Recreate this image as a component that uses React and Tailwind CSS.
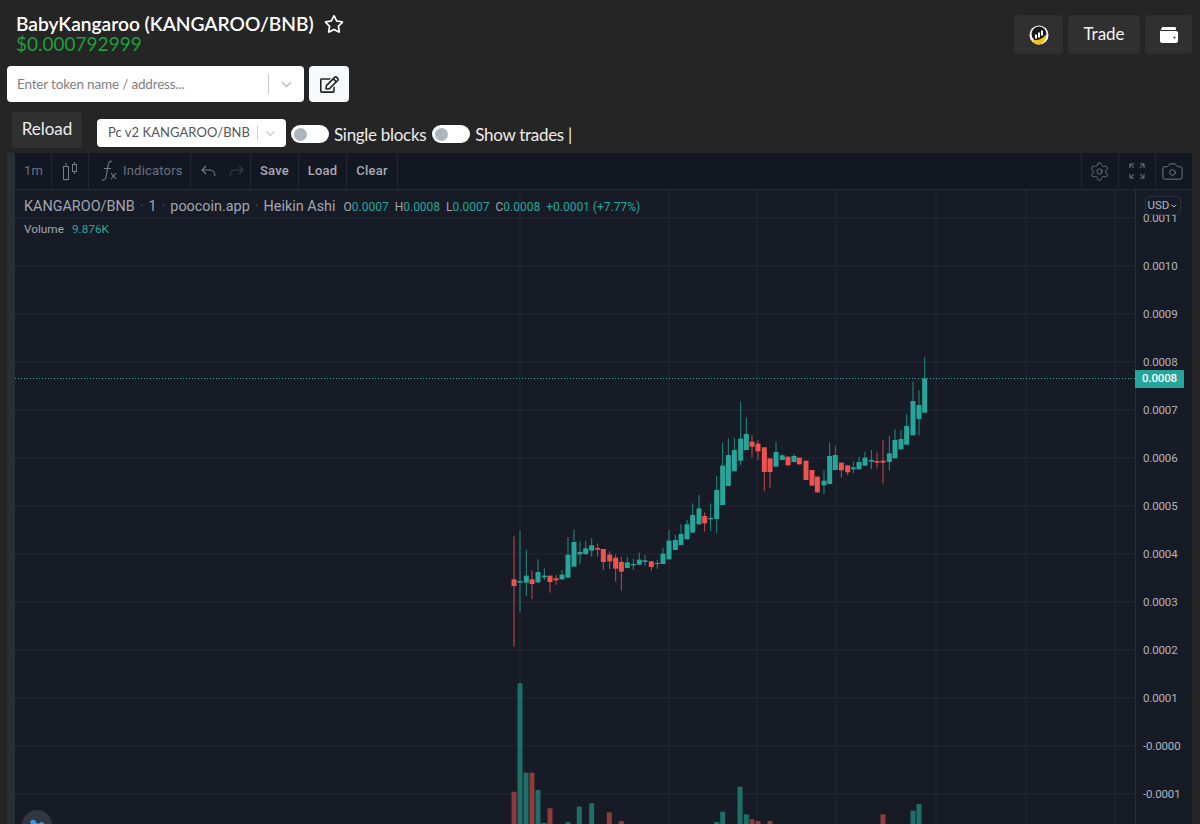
import { ChevronDown, Settings, Camera } from "lucide-react";
import { FaRegEdit, FaRegStar } from "react-icons/fa";

// candles read off the chart: x, wick top, wick bottom, body top, body bottom, green?
const toCandle = (ox, oy) => ([x, wt, wb, bt, bb, up]) => [ox + x / 3, oy + wt / 3, oy + wb / 3, oy + bt / 3, oy + bb / 3, up];

const firstHalf = [
  [42, 109, 440, 238, 258, 0], [60, 92, 335, 243, 248, 1], [79, 150, 288, 227, 248, 1], [96, 212, 297, 238, 252, 0],
  [114, 178, 250, 216, 247, 1], [133, 205, 240, 227, 232, 1], [150, 227, 278, 227, 246, 0], [168, 224, 255, 235, 241, 0],
  [186, 210, 240, 224, 238, 1], [204, 112, 233, 164, 233, 1], [222, 88, 200, 126, 200, 1], [240, 124, 192, 156, 163, 1],
  [257, 122, 165, 145, 162, 1], [275, 115, 170, 136, 152, 1], [293, 130, 170, 144, 149, 0], [310, 147, 210, 147, 186, 0],
  [329, 153, 207, 164, 184, 0], [347, 163, 245, 173, 206, 0], [364, 170, 272, 186, 215, 0], [382, 172, 205, 187, 204, 1],
  [400, 176, 210, 192, 196, 1], [418, 158, 196, 179, 194, 1], [435, 165, 197, 181, 186, 1], [454, 183, 213, 184, 201, 0],
  [472, 180, 207, 189, 192, 1], [489, 143, 192, 161, 192, 1], [507, 90, 178, 122, 178, 1], [526, 105, 150, 120, 150, 1],
  [543, 73, 135, 102, 135, 1], [561, 60, 118, 73, 118, 1], [578, 10, 98, 45, 98, 1], [597, -15, 73, 25, 73, 1],
  [614, 37, 95, 48, 70, 0], [632, 10, 93, 54, 58, 1],
].map(toCandle(500, 500));

const secondHalf = [
  [50, 378, 549, 420, 507, 1], [68, 278, 465, 347, 465, 1], [85, 265, 408, 315, 408, 1], [103, 264, 364, 300, 364, 1],
  [122, 155, 345, 266, 332, 1], [139, 202, 300, 252, 300, 1], [156, 255, 323, 275, 290, 0], [174, 270, 330, 281, 304, 0],
  [193, 292, 424, 292, 366, 0], [210, 325, 413, 325, 366, 0], [228, 275, 350, 306, 350, 1], [247, 312, 330, 316, 330, 1],
  [264, 320, 347, 320, 346, 0], [282, 312, 337, 318, 336, 1], [298, 323, 344, 323, 343, 0], [318, 332, 390, 332, 390, 0],
  [336, 360, 407, 360, 407, 0], [352, 380, 428, 380, 427, 0], [372, 360, 432, 392, 406, 1], [389, 278, 402, 318, 402, 1],
  [406, 288, 360, 315, 360, 1], [424, 338, 382, 338, 361, 0], [443, 346, 375, 346, 367, 0], [460, 335, 370, 352, 358, 1],
  [477, 320, 358, 336, 358, 1], [495, 305, 348, 323, 347, 1], [514, 300, 358, 330, 335, 1], [531, 308, 356, 333, 338, 0],
  [549, 270, 400, 332, 338, 0], [568, 258, 362, 310, 336, 1], [585, 238, 325, 270, 325, 1], [603, 240, 298, 267, 298, 1],
  [620, 192, 285, 228, 284, 1], [639, 95, 256, 153, 256, 1], [657, 120, 256, 165, 207, 1], [674, 22, 188, 85, 188, 1],
].map(toCandle(700, 350));

const candles = [...firstHalf, ...secondHalf];

// volume bars: x, top, green?
const volumes = [
  [514, 791.7, 0], [520, 683.3, 1], [526, 772.7, 1], [532, 772.7, 0], [538, 790, 1], [544, 823, 1], [550, 808.3, 0],
  [568, 822, 1], [579.3, 806.7, 1], [591.7, 803.3, 1], [609.3, 812.3, 0], [621.3, 821, 0], [716.7, 822, 1], [722.7, 811.7, 1],
  [740, 786.7, 1], [746.3, 814.3, 1], [752, 819.3, 0], [758, 821, 0], [770, 821, 0], [883, 814.3, 0], [913, 810.7, 1], [919, 804, 1],
];

const prices = ["0.0011", "0.0010", "0.0009", "0.0008", "0.0007", "0.0006", "0.0005", "0.0004", "0.0003", "0.0002", "0.0001", "-0.0000", "-0.0001"];
const gridY = prices.map((_, i) => 218 + i * 48);
const gridX = [520, 669, 757, 836, 936, 1026, 1115];

const GREEN = "#26a69a";
const RED = "#ef5350";

function PriceChart() {
  return (
    <svg className="h-full flex-1" viewBox="15 190 1120 634" preserveAspectRatio="none">
      {gridY.map((y) => (
        <line key={y} x1="15" x2="1135" y1={y} y2={y} stroke="#252934" />
      ))}
      {gridX.map((x) => (
        <line key={x} x1={x} x2={x} y1="190" y2="824" stroke="#252934" />
      ))}
      <line x1="15" x2="1135" y1="378.5" y2="378.5" stroke={GREEN} strokeDasharray="1 2" />
      {volumes.map(([x, top, up]) => (
        <rect key={x} x={x - 2.5} y={top} width="5" height={824 - top} fill={up ? "#1f6f69" : "#8e3b3c"} />
      ))}
      {candles.map(([x, wt, wb, bt, bb, up]) => (
        <g key={x} fill={up ? GREEN : RED}>
          <rect x={x - 0.5} y={wt} width="1" height={wb - wt} opacity="0.8" />
          <rect x={x - 2.5} y={bt} width="5" height={Math.max(bb - bt, 1)} />
        </g>
      ))}
    </svg>
  );
}

function ToolCell({ className = "", children }) {
  return <div className={`flex h-full items-center border-r border-[#232733] ${className}`}>{children}</div>;
}

function Toggle({ label }) {
  return (
    <div className="flex items-center">
      <div className="flex h-[18px] w-[38px] items-center rounded-full bg-white pl-[3px]">
        <div className="h-[13px] w-[13px] rounded-full bg-[#adb5bd]" />
      </div>
      <span className="ml-[5px] mt-[2px] whitespace-nowrap text-[17px] tracking-[-0.3px] text-[#ececec]">{label}</span>
    </div>
  );
}

export default function App() {
  return (
    <div className="h-[824px] w-[1200px] overflow-hidden bg-[#252525] font-['Lato',sans-serif]">
      <div className="flex h-[66px] justify-between">
        <div className="pl-4 pt-[13px]">
          <div className="flex h-[22px] items-center">
            <h1 className="text-[19.2px] font-semibold leading-none tracking-[-0.02px] text-white">BabyKangaroo (KANGAROO/BNB)</h1>
            <FaRegStar className="ml-[10px] text-[20px] text-white" />
          </div>
          <div className="-mt-px text-[19px] leading-[20px] text-[#1f9e3c]">$0.000792999</div>
        </div>
        <div className="flex gap-[5px] pr-2 pt-[15px]">
          <button className="flex h-[39px] w-[49px] items-center justify-center rounded bg-[#303030]">
            <svg width="20" height="20" viewBox="0 0 20 20">
              <circle cx="10" cy="10" r="9.5" fill="#fff" />
              <circle cx="10" cy="9" r="7.5" fill="#1a1a1a" />
              <path d="M3 14.5c5 1.5 10 0 14-5 .5 5-3 10-7.500 10-3 0-5.500-2-6.500-5z" fill="#f0c419" />
              <path d="M6 9.500h2v4H6zM9 7.500h2v5H9zM12 5.500h2v5h-2z" fill="#fff" />
            </svg>
          </button>
          <button className="h-[39px] w-[72px] rounded bg-[#303030] pb-0.5 text-[17px] text-[#f2f2f2]">Trade</button>
          <button className="flex h-[39px] w-[47px] items-center justify-center rounded bg-[#303030]">
            <svg width="18" height="16" viewBox="0 0 18 16">
              <path d="M2.500 0h12C15.500 0 16 .5 16 1.500V3H1.500C1 3 1 2 1.500 1.500 1.700.6 2 0 2.500 0z" fill="#fff" />
              <path d="M0 3.500C.5 4 1 4 2 4h14c1 0 2 .8 2 2v8c0 1.200-1 2-2 2H2c-1 0-2-.8-2-2z" fill="#fff" />
              <circle cx="14.500" cy="10.500" r="1" fill="#303030" />
            </svg>
          </button>
        </div>
      </div>

      <div className="flex h-9 gap-[5px] pl-[7px]">
        <div className="flex w-[297px] items-center rounded bg-white pl-2.5 pr-[9px]">
          <span className="flex-1 text-[13.5px] tracking-[-0.17px] text-[#808080]">Enter token name / address...</span>
          <div className="h-5 w-px bg-[#cccccc]" />
          <ChevronDown className="ml-[9px] h-[17px] w-[17px] text-[#c4c4c4]" />
        </div>
        <button className="flex w-10 items-center justify-center rounded bg-[#f8f9fa]">
          <FaRegEdit className="text-[19px] text-[#222222]" />
        </button>
      </div>

      <div className="flex h-[51px] pl-3 pt-2.5">
        <button className="h-9 w-[70px] rounded bg-[#303030] pb-0.5 text-[17px] text-[#ececec]">Reload</button>
        <div className="mt-[7px] ml-[15px] flex h-7 w-[189px] items-center rounded bg-white pl-[11px] pr-[8px]">
          <span className="flex-1 text-[13px] tracking-[0.05px] text-[#555555]">Pc v2 KANGAROO/BNB</span>
          <div className="h-[14px] w-px bg-[#cccccc]" />
          <ChevronDown className="ml-[5px] h-[15px] w-[15px] text-[#c4c4c4]" />
        </div>
        <div className="mt-[13px] ml-[5px] flex h-[18px] gap-[6px]">
          <Toggle label="Single blocks" />
          <Toggle label="Show trades |" />
        </div>
      </div>

      <div className="ml-[7px] flex h-[671px] w-[1185px] font-['Roboto',sans-serif]">
        <div className="w-2 bg-[#2a2e39]" />
        <div className="relative flex flex-1 flex-col bg-[#171b26]">
          <div className="flex h-[37px] justify-between border-b border-[#262a35] bg-[#131722] text-[13px] tracking-[0.2px]">
            <div className="flex h-full items-center text-[#6b7280]">
              <ToolCell className="w-[37px] justify-center pl-px">1m</ToolCell>
              <ToolCell className="w-[37px] justify-center">
                <svg width="16" height="20" viewBox="0 0 16 20" fill="none" stroke="#787b86">
                  <rect x="1.500" y="5.500" width="5" height="13" />
                  <path d="M4 2v3M4 18v2" />
                  <rect x="10.500" y="3.500" width="4" height="7" />
                  <path d="M12.500 1v2.500M12.500 10.500V13" />
                </svg>
              </ToolCell>
              <ToolCell className="w-[102px] gap-[4px] pl-[12px]">
                <svg width="18" height="22" viewBox="0 0 18 22" fill="none" stroke="#787b86" strokeWidth="1.100">
                  <path d="M1 20c2.500.5 3.500-.5 4-3l2.200-12.500C7.600 2 9 1 11 1.500M3 8.500h7" />
                  <path d="M10 13l5 6M15 13l-5 6" />
                </svg>
                <span>Indicators</span>
              </ToolCell>
              <ToolCell className="w-[60px] justify-center gap-[11px] pl-[3px]">
                <svg width="16" height="12" viewBox="0 0 16 12" fill="none" stroke="#787b86" strokeWidth="1.100">
                  <path d="M5 1L1 5l4 4M1 5h8c3 0 5 2 5 6" />
                </svg>
                <svg width="16" height="12" viewBox="0 0 16 12" fill="none" stroke="#3b3f4a" strokeWidth="1.100">
                  <path d="M11 1l4 4-4 4M15 5H7c-3 0-5 2-5 6" />
                </svg>
              </ToolCell>
              <ToolCell className="w-[48px] justify-center font-medium text-[#a8abb4]">Save</ToolCell>
              <ToolCell className="w-[48px] justify-center font-medium text-[#a8abb4]">Load</ToolCell>
              <ToolCell className="w-[51px] justify-center font-medium text-[#a8abb4]">Clear</ToolCell>
            </div>
            <div className="flex h-full items-center">
              <div className="flex h-full w-[37px] items-center justify-center border-l border-[#232733] pr-0.5">
                <Settings className="h-[21px] w-[21px] text-[#787b86]" strokeWidth={1} />
              </div>
              <div className="flex h-full w-[37px] items-center justify-center border-l border-[#232733]">
                <svg width="16" height="16" viewBox="0 0 16 16" fill="none" stroke="#787b86">
                  <path d="M1 5V1h4M1 1l4 4M11 1h4v4M15 1l-4 4M1 11v4h4M1 15l4-4M15 11v4h-4M15 15l-4-4" />
                </svg>
              </div>
              <div className="flex h-full w-[37px] items-center justify-center border-l border-[#232733] pr-1">
                <Camera className="h-[23px] w-[23px] text-[#787b86]" strokeWidth={1} />
              </div>
            </div>
          </div>

          <div className="relative flex min-h-0 flex-1">
            <PriceChart />
            <div className="w-[57px] overflow-hidden border-l border-[#2a2e39] pl-[7px] pt-[4.5px] text-[11.5px] tracking-[-0.15px] text-[#b2b5be]">
              {prices.map((p) => (
                <div key={p} className="flex h-12 items-center">{p}</div>
              ))}
            </div>

            {/* legend, sits over the chart */}
            <div className="absolute left-[9px] top-[6px]">
              <div className="flex items-center text-[14.4px] text-[#a3a6af]">
                <span>KANGAROO/BNB</span>
                <span className="mx-[5px] text-[#555a66]">·</span>
                <span>1</span>
                <span className="mx-[5px] text-[#555a66]">·</span>
                <span>poocoin.app</span>
                <span className="mx-[5px] text-[#555a66]">·</span>
                <span>Heikin Ashi</span>
                <span className="ml-[8px] flex gap-[6px] text-[12px] text-[#26a69a]">
                  <span><span className="text-[#a3a6af]">O</span>0.0007</span>
                  <span><span className="text-[#a3a6af]">H</span>0.0008</span>
                  <span><span className="text-[#a3a6af]">L</span>0.0007</span>
                  <span><span className="text-[#a3a6af]">C</span>0.0008</span>
                  <span>+0.0001 (+7.77%)</span>
                </span>
              </div>
              <div className="mt-[3px] flex gap-2 text-[11.8px] text-[#a3a6af]">
                <span>Volume</span>
                <span className="text-[#26a69a]">9.876K</span>
              </div>
            </div>

            <div className="absolute right-[11px] top-[6px] flex h-[19px] w-9 items-center justify-center gap-px rounded-sm border border-[#2f3340] bg-[#171b26] text-[11.5px] text-[#b2b5be]">
              USD
              <ChevronDown className="h-2 w-2" strokeWidth={3} />
            </div>
            <div className="absolute right-2 top-[180px] flex h-[18px] w-[49px] items-center bg-[#26a69a] pl-[7px] text-[11.5px] font-medium tracking-[-0.15px] text-white">
              0.0008
            </div>
            <div className="absolute left-[7px] top-[620px] flex h-[30px] w-[30px] justify-center rounded-full bg-[#323641] pt-[9px]">
              <svg width="16" height="12" viewBox="0 0 16 12">
                <path d="M1 3c2-3 5-3 6 0 1 2 3 2 5 0l3 1c-1 4-4 6-7 6C5 10 3 7 1 3z" fill="#2f9bf0" />
              </svg>
            </div>
          </div>
        </div>
      </div>
    </div>
  );
}
